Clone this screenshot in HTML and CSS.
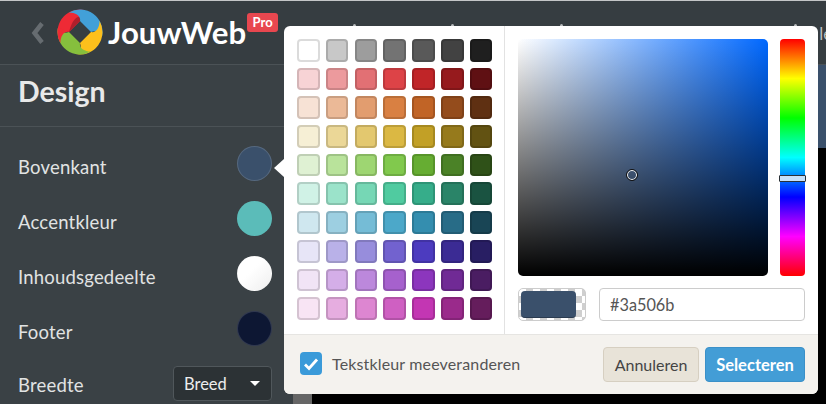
FILE: index.html
```html
<!DOCTYPE html>
<html lang="nl">
<head>
    <meta charset="UTF-8">
    <meta name="viewport" content="width=device-width, initial-scale=1.0">
    <title>Design</title>
    <link rel="stylesheet" href="styles.css">
</head>
<body>
    <header class="topbar">
        <svg class="back" width="14" height="24" viewBox="0 0 14 24"><path d="M11 2.500 3.500 12l7.500 9.500" fill="none" stroke="#666c70" stroke-width="4.500"/></svg>
        <svg class="logo" width="46" height="46" viewBox="-23 -23 46 46">
            <defs>
                <path id="blade" d="M-11-19.600A22.500 22.500 0 0 1 22.100 4.300C21 0 16-2 11 0L0-11C1-16-4-19.500-11-19.600Z"/>
                <path id="tail" d="M-11-19.600A22.500 22.500 0 0 1 5-21.900L1-14 0-11C1-16-4-19.500-11-19.600Z"/>
            </defs>
            <use href="#blade" fill="#ee2a35" transform="rotate(270)"/>
            <path d="M-11 0 0-11 .5-15C-3-16-8-12-11 0Z" fill="#b01f2b"/>
            <use href="#blade" fill="#42a0d8"/>
            <use href="#blade" fill="#fdc01c" transform="rotate(90)"/>
            <use href="#blade" fill="#86bf3d" transform="rotate(180)"/>
            <use href="#tail" fill="#ee2a35" transform="rotate(270)"/>
        </svg>
        <span class="brand">JouwWeb</span>
        <span class="pro">Pro</span>
        <nav class="topnav">
            <i class="dot dot-a"></i>
            <i class="dot dot-b"></i>
            <i class="dot dot-c"></i>
            <i class="dot dot-d"></i>
            <span class="nav-text">le</span>
        </nav>
    </header>

    <div class="main">
        <aside class="sidebar">
            <h1 class="side-title">Design</h1>
            <div class="side-rows">
                <div class="row"><span class="row-label">Bovenkant</span><span class="dot-color color-top"></span></div>
                <div class="row"><span class="row-label">Accentkleur</span><span class="dot-color color-accent"></span></div>
                <div class="row"><span class="row-label">Inhoudsgedeelte</span><span class="dot-color color-content"></span></div>
                <div class="row"><span class="row-label">Footer</span><span class="dot-color color-footer"></span></div>
                <div class="row"><span class="row-label plain">Breedte</span>
                    <div class="select-menu"><span>Breed</span><i class="caret"></i></div>
                </div>
            </div>
        </aside>
        <div class="scroll-strip"></div>
        <section class="preview">
            <div class="preview-head"></div>
        </section>
    </div>

    <div class="popup">
        <i class="popup-arrow"></i>
        <div class="popup-body">
            <div class="palette">
                <div class="swatches">
                    <b style="background:#ffffff"></b><b style="background:#c8c8c8"></b><b style="background:#9d9d9d"></b><b style="background:#737373"></b><b style="background:#595959"></b><b style="background:#424242"></b><b style="background:#1f1f1f"></b>
                    <b style="background:#f7d3d5"></b><b style="background:#ec9a9d"></b><b style="background:#e27074"></b><b style="background:#dd4347"></b><b style="background:#c02528"></b><b style="background:#961a1d"></b><b style="background:#5f1013"></b>
                    <b style="background:#f7e2d5"></b><b style="background:#ebb997"></b><b style="background:#e29d6f"></b><b style="background:#d98042"></b><b style="background:#c16426"></b><b style="background:#944c1c"></b><b style="background:#5f3012"></b>
                    <b style="background:#f6efd5"></b><b style="background:#ebd797"></b><b style="background:#e3c86f"></b><b style="background:#dbb843"></b><b style="background:#c2a026"></b><b style="background:#967a1c"></b><b style="background:#625212"></b>
                    <b style="background:#dff1d3"></b><b style="background:#b9e39b"></b><b style="background:#9ed672"></b><b style="background:#81c94d"></b><b style="background:#66ad32"></b><b style="background:#4b8227"></b><b style="background:#2f5118"></b>
                    <b style="background:#d0f2e6"></b><b style="background:#9be3ca"></b><b style="background:#76d7b5"></b><b style="background:#50cba0"></b><b style="background:#36ad8a"></b><b style="background:#2a8468"></b><b style="background:#1a5341"></b>
                    <b style="background:#cfe7ef"></b><b style="background:#9dcfe1"></b><b style="background:#75bcd6"></b><b style="background:#4ca8c9"></b><b style="background:#348eaf"></b><b style="background:#286c87"></b><b style="background:#194555"></b>
                    <b style="background:#e7e5f7"></b><b style="background:#b9b1e8"></b><b style="background:#978ddc"></b><b style="background:#7262cf"></b><b style="background:#4c3bbf"></b><b style="background:#3b2b94"></b><b style="background:#281e63"></b>
                    <b style="background:#f1e4f6"></b><b style="background:#d4aee8"></b><b style="background:#bc88dc"></b><b style="background:#a661cd"></b><b style="background:#8c36bd"></b><b style="background:#702a95"></b><b style="background:#4a1d62"></b>
                    <b style="background:#f8e4f4"></b><b style="background:#e6ade0"></b><b style="background:#dd86d1"></b><b style="background:#cf60c2"></b><b style="background:#c336b3"></b><b style="background:#9a2a8b"></b><b style="background:#651d5c"></b>
                </div>
            </div>
            <div class="picker">
                <div class="picker-top">
                    <div class="sat-box"><i class="sat-marker"></i></div>
                    <div class="hue-bar"><i class="hue-thumb"></i></div>
                </div>
                <div class="picker-bottom">
                    <div class="current"><span class="current-fill"></span></div>
                    <input class="hex-input" type="text" value="#3a506b">
                </div>
            </div>
        </div>
        <div class="popup-foot">
            <label class="check">
                <span class="check-box"><svg width="16" height="14" viewBox="0 0 16 14"><path d="M2 7.500 6 11.500 14 2.500" fill="none" stroke="#fff" stroke-width="2.800"/></svg></span>
                Tekstkleur meeveranderen
            </label>
            <div class="foot-btns">
                <button class="btn btn-cancel">Annuleren</button>
                <button class="btn btn-select">Selecteren</button>
            </div>
        </div>
    </div>
</body>
</html>
```

FILE: styles.css
```css
*{
    margin: 0;
    padding: 0;
    box-sizing: border-box;
}
html, body{
    height: 100%;
    overflow: hidden;
}
body{
    display: flex;
    flex-direction: column;
    background: #000;
    font-family: "Lato", "Liberation Sans", sans-serif;
}
.topbar{
    display: flex;
    align-items: center;
    flex: none;
    height: 65px;
    padding-left: 31px;
    background: #363d41;
    border-top: 1px solid #c4c6c7;
    border-bottom: 1px solid #4b5256;
}
.back{
    flex: none;
    margin-right: 12px;
}
.logo{
    flex: none;
    margin-top: -1px;
}
.brand{
    margin: -2px 0 0 5px;
    color: #fff;
    font-size: 31.200px;
    font-weight: 700;
}
.pro{
    align-self: flex-start;
    margin: 12px 0 0 1px;
    padding: 0 5.500px;
    height: 19px;
    line-height: 19px;
    border-radius: 3px;
    background: #e8474f;
    color: #fff;
    font-size: 13px;
    font-weight: 700;
}
.topnav{
    display: flex;
    flex: 1;
    align-self: stretch;
    overflow: hidden;
}
.dot{
    flex: none;
    width: 3px;
    height: 3px;
    margin-top: 23px;
    border-radius: 50%;
    background: #b9bcbe;
}
.dot-a{ margin-left: 75px; }
.dot-b{ margin-left: 95px; }
.dot-c{ margin-left: 106px; }
.dot-d{ margin-left: 231px; }
.nav-text{
    margin: 22px 0 0 22px;
    color: #b9bcbe;
    font-size: 17px;
    white-space: nowrap;
}
.main{
    display: flex;
    flex: 1;
    min-height: 0;
}
.sidebar{
    flex: none;
    width: 293px;
    background: #3a4145;
}
.side-title{
    height: 62px;
    padding: 9px 0 0 18px;
    border-bottom: 1px solid #4b5256;
    color: #e8e9e9;
    font-size: 28.500px;
    font-weight: 700;
}
.side-rows{
    padding: 9px 21px 0 18px;
}
.row{
    display: flex;
    align-items: center;
    justify-content: space-between;
    height: 55px;
}
.row-label{
    padding-top: 6px;
    color: #e1e3e3;
    font-size: 18.500px;
    letter-spacing: .2px;
}
.row-label.plain{
    padding-top: 2px;
}
.dot-color{
    width: 35px;
    height: 35px;
    border-radius: 50%;
    border: 1px solid rgba(255,255,255,.14);
}
.color-top{ background: #3a506b; }
.color-accent{ background: #5bbcb9; border-color: transparent; }
.color-content{ background: linear-gradient(135deg, #fff 40%, #efefef); border-color: transparent; }
.color-footer{ background: #0d1733; }
.select-menu{
    display: flex;
    align-items: center;
    justify-content: space-between;
    width: 99px;
    height: 35px;
    padding: 0 11px 0 10px;
    border: 1px solid #50575b;
    border-radius: 4px;
    background: #2c3235;
    color: #eceded;
    font-size: 16.500px;
}
.caret{
    border-left: 5px solid transparent;
    border-right: 5px solid transparent;
    border-top: 5px solid #fff;
}
.scroll-strip{
    flex: none;
    width: 19px;
    background: #666;
}
.preview{
    flex: 1;
    background: #000;
}
.preview-head{
    height: 83px;
    background: #3a506b;
}

/* color popup */
.popup{
    position: absolute;
    left: 284px;
    top: 26px;
    width: 534px;
    height: 368px;
    display: flex;
    flex-direction: column;
    border-radius: 6px;
    background: #fff;
}
.popup-arrow{
    position: absolute;
    left: -10px;
    top: 133px;
    border-top: 9px solid transparent;
    border-bottom: 9px solid transparent;
    border-right: 10px solid #fff;
}
.popup-body{
    display: flex;
    flex: 1;
    min-height: 0;
}
.palette{
    flex: none;
    width: 221px;
    padding: 13px 0 0 13px;
    border-right: 1px solid #e2e2e2;
}
.swatches{
    display: grid;
    grid-template-columns: repeat(7, 22.7px);
    grid-auto-rows: 22.700px;
    gap: 6px 6.100px;
}
.swatches b{
    display: block;
    border-radius: 4px;
    box-shadow: inset 0 0 0 2px rgba(0,0,0,.14);
}
.picker{
    flex: 1;
    padding: 13px 13px 0 13px;
}
.picker-top{
    display: flex;
    justify-content: space-between;
}
.sat-box{
    position: relative;
    width: 250px;
    height: 237px;
    border-radius: 5px;
    background: linear-gradient(to top, #000, rgba(0,0,0,0)), linear-gradient(to right, #fff, #0068ff);
}
.sat-marker{
    position: absolute;
    left: 108px;
    top: 130px;
    width: 12px;
    height: 12px;
    border-radius: 50%;
    border: 1px solid #111;
    box-shadow: inset 0 0 0 1px #fff;
}
.hue-bar{
    position: relative;
    width: 25px;
    height: 237px;
    border-radius: 4px;
    background: linear-gradient(to bottom, #f00, #ff0 16.67%, #0f0 33.33%, #0ff 50%, #00f 66.67%, #f0f 83.33%, #f00);
}
.hue-thumb{
    position: absolute;
    left: -1px;
    right: -1px;
    top: 136px;
    height: 7px;
    border: 1px solid #2a3035;
    border-radius: 1px;
    background: #c5e0fa;
}
.picker-bottom{
    display: flex;
    justify-content: space-between;
    margin-top: 12px;
}
.current{
    width: 68px;
    height: 33px;
    padding: 2px;
    border: 1px solid #ccc;
    border-radius: 5px;
    background: repeating-conic-gradient(#cfcfcf 0 25%, #fff 0 50%) 0 0 / 14px 14px;
}
.current-fill{
    display: block;
    width: 55px;
    height: 27px;
    border-radius: 4px;
    background: #3a506b;
    border-bottom: 1px solid #2a3b50;
}
.hex-input{
    width: 206px;
    height: 33px;
    padding: 0 10px;
    border: 1px solid #ccc;
    border-radius: 4px;
    outline: none;
    color: #555;
    font-family: inherit;
    font-size: 16.300px;
}
.popup-foot{
    display: flex;
    align-items: center;
    justify-content: space-between;
    flex: none;
    height: 60px;
    padding: 0 13px 0 16px;
    border-top: 1px solid #e6e5e2;
    border-radius: 0 0 6px 6px;
    background: #f4f2ee;
}
.check{
    display: flex;
    align-items: center;
    gap: 10px;
    margin-top: -2px;
    color: #555;
    font-size: 16px;
    letter-spacing: .15px;
}
.check-box{
    display: flex;
    align-items: center;
    justify-content: center;
    width: 22px;
    height: 23px;
    border-radius: 4px;
    background: #3a9ad9;
}
.foot-btns{
    display: flex;
    gap: 6px;
}
.btn{
    height: 35px;
    border-radius: 4px;
    font-family: inherit;
    font-size: 16px;
}
.btn-cancel{
    width: 96px;
    border: 1px solid #d6cfc1;
    background: #e8e3d8;
    color: #444;
}
.btn-select{
    width: 100px;
    border: 1px solid #3b90c8;
    background: #439dd6;
    color: #fff;
    font-size: 16.500px;
    font-weight: 700;
}
```
